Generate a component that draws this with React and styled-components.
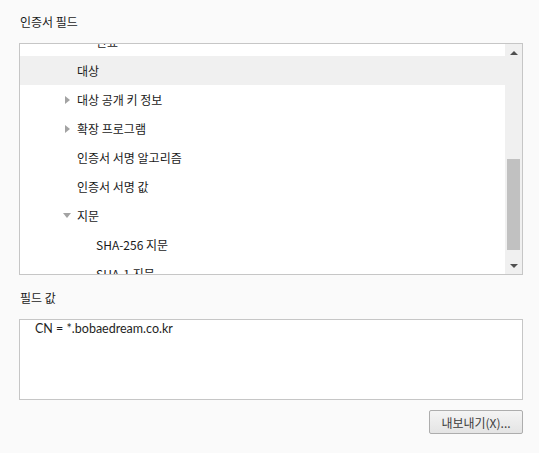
import React from 'react'
import styled, { createGlobalStyle } from 'styled-components'

const Global = createGlobalStyle`
  html, body { margin: 0; padding: 0; background: #fafafa; }
  body { font-family: "Noto Sans", "Noto Sans CJK KR", sans-serif; font-size: 12px; color: #1a1a1a; }
`

const Page = styled.div`
  width: 539px;
  height: 453px;
  box-sizing: border-box;
  padding: 14px 16px 0 19px;
  display: flex;
  flex-direction: column;
  background: #fafafa;
`

const Label = styled.div`
  line-height: 16px;
  height: 16px;
  padding-left: 1px;
  margin-top: ${p => p.$top || 0}px;
  font-family: "Noto Sans CJK KR", sans-serif;
`

const Box = styled.div`
  margin-top: 13px;
  height: ${p => p.$h}px;
  box-sizing: border-box;
  border: 1px solid #c6c6c6;
  background: #fff;
  display: flex;
  overflow: hidden;
`

const List = styled.div`
  flex: 1;
  overflow: hidden;
`

const Rows = styled.div`
  margin-top: -17px;
`

const Row = styled.div`
  height: 29px;
  display: flex;
  align-items: center;
  padding-left: ${p => p.$level === 2 ? 63 : 44}px;
  background: ${p => p.$selected ? '#f0f0f0' : 'transparent'};
  font-family: "Noto Sans CJK KR", sans-serif;
  white-space: nowrap;
`

const Toggle = styled.span`
  width: 13px;
  flex: none;
  display: flex;
  align-items: center;
  &::before {
    content: '';
    display: ${p => p.$state ? 'block' : 'none'};
    border-style: solid;
    border-color: transparent;
    ${p => p.$state === 'closed' && `
      border-width: 4px 0 4px 5px;
      border-left-color: #a3a3a3;
      margin-left: 1px;
    `}
    ${p => p.$state === 'open' && `
      border-width: 5px 4px 0 4px;
      border-top-color: #a3a3a3;
      margin-left: -1px;
    `}
  }
`

const ScrollBar = styled.div`
  width: 17px;
  flex: none;
  background: #f0f0f0;
  display: flex;
  flex-direction: column;
  align-items: center;
`

const Arrow = styled.div`
  height: 17px;
  flex: none;
  display: flex;
  align-items: center;
  justify-content: center;
  &::before {
    content: '';
    border-style: solid;
    border-color: transparent;
    ${p => p.$dir === 'up' ? `
      border-width: 0 4px 4px 4px;
      border-bottom-color: #505050;
    ` : `
      border-width: 4px 4px 0 4px;
      border-top-color: #505050;
    `}
  }
`

const Track = styled.div`
  flex: 1;
  width: 100%;
  display: flex;
  justify-content: center;
`

const Thumb = styled.div`
  width: 13px;
  height: 91px;
  margin-top: 98px;
  background: #c1c1c1;
`

const ValueText = styled.div`
  padding: 1px 15px;
  line-height: 16px;
  font-family: Lato, "Noto Sans CJK KR", sans-serif;
  font-size: 12.5px;
  color: #1f1f1f;
`

const Footer = styled.div`
  margin-top: 10px;
  display: flex;
  justify-content: flex-end;
`

const Button = styled.button`
  width: 94px;
  height: 24px;
  padding: 0;
  border: 1px solid #adadad;
  border-radius: 2px;
  background: linear-gradient(#f4f4f4, #e4e4e4);
  color: #3c3c3c;
  font-family: "Noto Sans CJK KR", sans-serif;
  font-size: 12px;
`

const rows = [
  { text: '만료', level: 2 },
  { text: '대상', level: 1, selected: true },
  { text: '대상 공개 키 정보', level: 1, toggle: 'closed' },
  { text: '확장 프로그램', level: 1, toggle: 'closed' },
  { text: '인증서 서명 알고리즘', level: 1 },
  { text: '인증서 서명 값', level: 1 },
  { text: '지문', level: 1, toggle: 'open' },
  { text: 'SHA-256 지문', level: 2 },
  { text: 'SHA-1 지문', level: 2 },
]

export default function App() {
  return (
    <Page>
      <Global />
      <Label>인증서 필드</Label>
      <Box $h={232}>
        <List>
          <Rows>
            {rows.map((r, i) => (
              <Row key={i} $level={r.level} $selected={r.selected}>
                <Toggle $state={r.toggle} />
                {r.text}
              </Row>
            ))}
          </Rows>
        </List>
        <ScrollBar>
          <Arrow $dir="up" />
          <Track><Thumb /></Track>
          <Arrow $dir="down" />
        </ScrollBar>
      </Box>
      <Label $top={15}>필드 값</Label>
      <Box $h={81}>
        <ValueText>CN = *.bobaedream.co.kr</ValueText>
      </Box>
      <Footer>
        <Button>내보내기(X)...</Button>
      </Footer>
    </Page>
  )
}
